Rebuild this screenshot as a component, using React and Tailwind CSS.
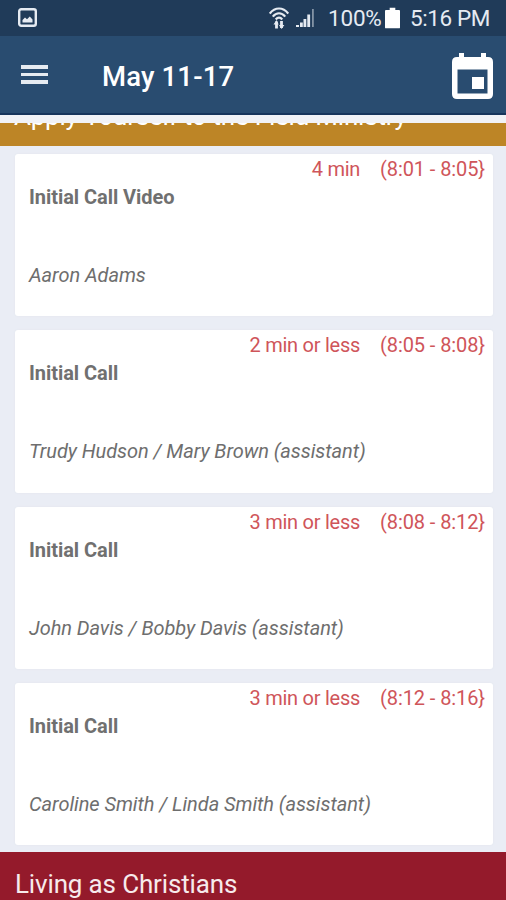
import React from 'react';

const parts = [
    { id: 1, title: 'Initial Call Video', length: '4 min', time: '(8:01 - 8:05}', names: 'Aaron Adams' },
    { id: 2, title: 'Initial Call', length: '2 min or less', time: '(8:05 - 8:08}', names: 'Trudy Hudson / Mary Brown (assistant)' },
    { id: 3, title: 'Initial Call', length: '3 min or less', time: '(8:08 - 8:12}', names: 'John Davis / Bobby Davis (assistant)' },
    { id: 4, title: 'Initial Call', length: '3 min or less', time: '(8:12 - 8:16}', names: 'Caroline Smith / Linda Smith (assistant)' },
];

const StatusBar = () => (
    <div className="flex h-9 shrink-0 items-center bg-[#203b59] pl-[18px] pr-[15px] text-[#e6ebf2]">
        <svg className="h-5 w-5" viewBox="0 0 20 20" fill="none">
            <rect x="1.2" y="1.2" width="16.6" height="16.6" rx="2" stroke="currentColor" strokeWidth="2.4" />
            <path d="M4.5 14.5V12l2.5-2.5 2 1.8 2.8-2.8 2.7 3v3z" fill="currentColor" />
        </svg>

        {/* Wifi with transfer arrows */}
        <svg className="ml-auto h-[23px] w-5" viewBox="0 0 20 23" fill="none" stroke="currentColor">
            <path d="M.8 6.500C6-.2 14-.2 19.200 6.500" strokeWidth="2.2" />
            <path d="M3.800 9.600c3.700-4.500 8.700-4.500 12.400 0" strokeWidth="2.2" />
            <path d="M6.800 12.400c2-2.400 4.400-2.400 6.400 0" strokeWidth="2.4" />
            <path d="M7.500 21.500v-7M12.500 14v7" strokeWidth="2.800" />
            <path d="M4.500 17.500 7.500 13l2.200 4.500zM10 18h5.400l-2.900 4z" fill="currentColor" stroke="none" />
        </svg>

        <svg className="ml-[7px] h-[19px] w-[19px]" viewBox="0 0 19 19" fill="currentColor">
            <path d="M0 16h3v2H0zM4 13.500h2.800V18H4zM7.500 10h2.800v8H7.500zM11.300 5.500h2.800V18h-2.800z" />
            <path d="M16 0h1.800v18H16z" opacity=".5" />
        </svg>

        <span className="ml-[13px] w-[54px] whitespace-nowrap text-[22.5px] leading-9 tracking-[-0.2px]">100%</span>
        <svg className="ml-[3px] h-[22px] w-[15px]" viewBox="0 0 16 22" fill="white">
            <path d="M5 0h6v2.500h4q1 0 1 1V21q0 1-1 1H1q-1 0-1-1V3.500q0-1 1-1h4z" />
        </svg>
        <span className="ml-[10px] w-[81px] whitespace-nowrap text-[22.5px] leading-9 tracking-[-0.4px]">5:16 PM</span>
    </div>
);

const Header = () => (
    <header className="flex h-[79px] shrink-0 items-center border-b-2 border-[#17355b] bg-[#294c70] pl-[21px] pr-[13px] text-white">
        <button aria-label="Menu" className="flex w-[27px] flex-col gap-1">
            <span className="h-[3.500px] w-full bg-[#e6ebf1]"></span>
            <span className="h-[3.500px] w-full bg-[#e6ebf1]"></span>
            <span className="h-[3.500px] w-full bg-[#e6ebf1]"></span>
        </button>
        <h1 className="ml-[54px] whitespace-nowrap pt-[5px] text-[27.5px] font-medium tracking-[0.15px]">May 11-17</h1>
        <button aria-label="Calendar" className="ml-auto pt-[3px]">
            <svg className="h-[46px] w-[41px]" viewBox="0 0 41 46" fill="white">
                <path fillRule="evenodd" d="M7 0h5v4h17V0h5v4h2q5 0 5 5v32q0 5-5 5H5q-5 0-5-5V9q0-5 5-5h2zM5.500 16.500V40.500h30V16.500z" />
                <path d="M20 24h12v12H20z" />
            </svg>
        </button>
    </header>
);

const PartCard = ({ part }) => (
    <article className="flex h-[162.300px] shrink-0 flex-col rounded-[3px] bg-white px-[14px] shadow-[0_0_2px_#e2e5ed]">
        <div className="-mr-[6px] flex h-[30px] justify-end gap-5 whitespace-nowrap text-[20px] leading-[30px] tracking-[-0.1px] text-[#cf555a]">
            <span className="tracking-[-0.25px]">{part.length}</span>
            <span>{part.time}</span>
        </div>
        <h2 className="text-[20px] font-bold leading-[26px] tracking-[-0.05px] text-[#707070]">{part.title}</h2>
        <p className="mt-[52px] whitespace-nowrap text-[20px] italic leading-[26px] tracking-[-0.06px] text-[#6e6e6e]">{part.names}</p>
    </article>
);

const App = () => {
    return (
        <div className="flex h-[900px] w-full flex-col overflow-hidden bg-[#eaedf5] font-['Roboto',sans-serif]">
            <StatusBar />
            <Header />
            <div className="h-2 shrink-0 bg-[#f1f2f6]"></div>

            {/* Section heading scrolled partly under the header */}
            <div className="flex h-[23px] shrink-0 flex-col justify-end overflow-hidden bg-[#bd8526]">
                <h2 className="whitespace-nowrap pb-[15px] pl-[14px] text-[26px] leading-[30px] tracking-[-0.22px] text-white">Apply Yourself to the Field Ministry</h2>
            </div>

            <main className="flex shrink-0 flex-col gap-[14px] pb-[7px] pl-[15px] pr-[13px] pt-2">
                {parts.map((part) => (
                    <PartCard key={part.id} part={part} />
                ))}
            </main>

            <div className="h-12 shrink-0 bg-[#941a2b] pl-[15px] pt-[17px]">
                <h2 className="whitespace-nowrap text-[26px] leading-[30px] tracking-[-0.15px] text-[#f7eaec]">Living as Christians</h2>
            </div>
        </div>
    );
};

export default App;
